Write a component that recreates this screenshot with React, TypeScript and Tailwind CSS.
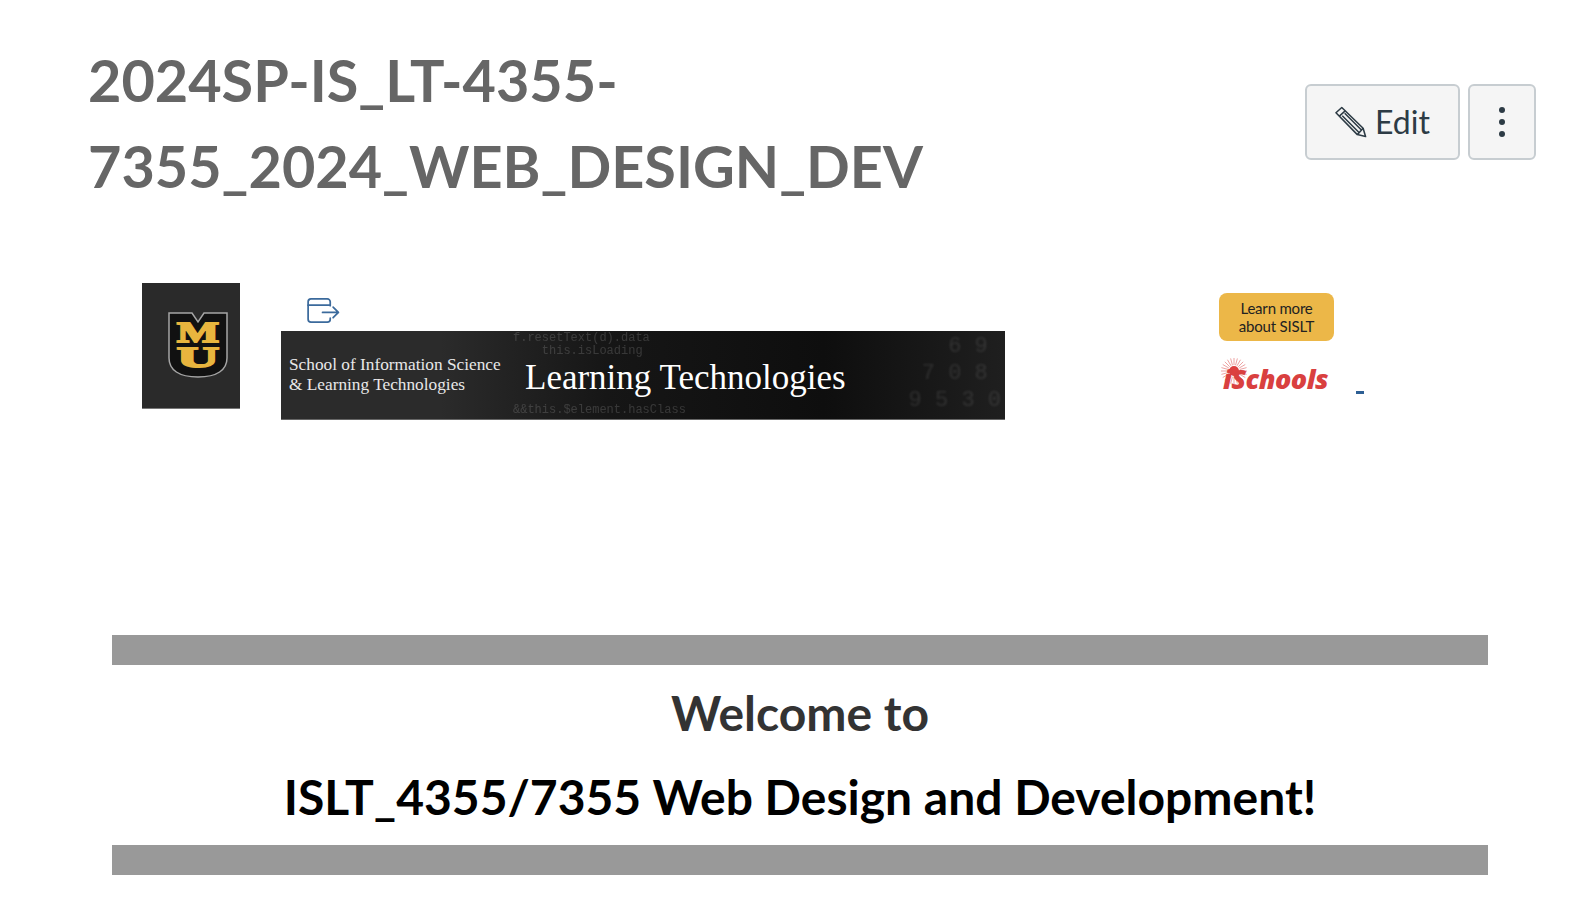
const serif = "font-['Liberation_Serif',serif]";
const mono = "font-['Liberation_Mono',monospace]";

const rays = Array.from({ length: 24 }, (_, i) => (i * Math.PI) / 12);

function PencilIcon() {
  return (
    <svg viewBox="0 0 33 33" className="w-[32px] h-[32px]" fill="none" stroke="#2d3b45" strokeWidth="1.600" strokeLinejoin="round">
      <path d="M1 7 7 1.500 29 23l2.500 8.500L23 29.500z" />
      <path d="M4.500 10.500 10.500 5M10 7.500l17 17M7.500 10l17 17M29 23l-6 6.500" />
    </svg>
  );
}

function ExternalIcon() {
  return (
    <svg viewBox="0 0 34 26" className="w-[33px] h-[25px]" fill="none" stroke="#3b6a9c" strokeWidth="1.800" strokeLinecap="round" strokeLinejoin="round">
      <path d="M24 8V4a3 3 0 0 0-3-3H4a3 3 0 0 0-3 3v18a3 3 0 0 0 3 3h17a3 3 0 0 0 3-3v-1" />
      <path d="M1 7.500h23M16 15h16.500M27 9.500l5.500 5.500-5.500 5.500" />
    </svg>
  );
}

function MuLogo() {
  return (
    <div className="w-[98px] h-[126px] bg-[#2a2a2a] border-b border-[#777] flex items-center justify-center shrink-0">
      <svg viewBox="0 0 60 66" className="w-[60px] h-[66px] ml-[14px] mb-[2px]">
        <path d="M1 1h23l6 9 6-9h23v45c0 12-10 19-29 19S1 58 1 46z" fill="#111" stroke="#a5a5a5" strokeWidth="1.500" />
        <text x="9" y="30" fontFamily="Liberation Serif" fontWeight="700" fontSize="30" fill="#e8b53e" stroke="#e8b53e" strokeWidth="1.800" textLength="42" lengthAdjust="spacingAndGlyphs">M</text>
        <text x="9" y="55" fontFamily="Liberation Serif" fontWeight="700" fontSize="29" fill="#e8b53e" stroke="#e8b53e" strokeWidth="1.800" textLength="42" lengthAdjust="spacingAndGlyphs">U</text>
      </svg>
    </div>
  );
}

function Banner() {
  return (
    <div className="relative w-[724px] h-[89px] overflow-hidden bg-[linear-gradient(90deg,#2b2b2b_0%,#2b2b2b_22%,#161616_45%,#0e0e0e_75%,#1f1f1f_100%)] border-b border-[#666] text-white">
      {/* faint code texture, kept clear of the titles */}
      <div className={`absolute left-[232px] top-[1px] ${mono} text-[12px] leading-[13px] text-white/15 blur-[0.6px] whitespace-pre`}>
        {'f.resetText(d).data\n    this.isLoading'}
      </div>
      <div className={`absolute left-[232px] top-[72px] ${mono} text-[12px] leading-[14px] text-white/15 blur-[0.6px] whitespace-pre`}>
        {'&&this.$element.hasClass'}
      </div>
      <div className={`absolute right-[4px] top-[2px] ${mono} text-[22px] leading-[27px] text-white/10 blur-[1px] whitespace-pre`}>
        {'    6 9\n  7 0 8\n 9 5 3 0'}
      </div>
      <div className={`absolute left-[8px] top-[24px] ${serif} text-[17.300px] leading-[20px] text-[#e8e8e8]`}>
        <div>School of Information Science</div>
        <div>&amp; Learning Technologies</div>
      </div>
      <div className={`absolute left-[244px] top-[26px] ${serif} text-[35px] leading-[42px] text-white`}>
        Learning Technologies
      </div>
    </div>
  );
}

function ISchools() {
  return (
    <div className="relative h-[40px] w-[112px]">
      <svg viewBox="0 0 28 28" className="absolute left-[1px] top-0 w-[28px] h-[28px]">
        {rays.map((a) => (
          <line
            key={a}
            x1={14 + 6 * Math.cos(a)}
            y1={14 + 6 * Math.sin(a)}
            x2={14 + 13 * Math.cos(a)}
            y2={14 + 13 * Math.sin(a)}
            stroke="#eda3a3"
            strokeWidth="1"
          />
        ))}
        <circle cx="14" cy="14" r="5" fill="#dd4040" />
      </svg>
      <span className="absolute left-[4px] top-[4px] font-['Open_Sans',sans-serif] italic font-extrabold text-[27px] leading-[36px] tracking-[-0.500px] text-[#d9403f]">
        iSchools
      </span>
    </div>
  );
}

export default function App() {
  return (
    <div className="w-[1592px] h-[908px] overflow-hidden bg-white font-['Lato',sans-serif]">
      <header className="flex justify-between items-start pl-[88px] pr-[56px] pt-[37px]">
        <h1 className="w-[1000px] text-[57.600px] leading-[86px] font-bold text-[#666666]">
          2024SP-IS_LT-4355-<br />7355_2024_WEB_DESIGN_DEV
        </h1>
        <div className="flex gap-[8px] mt-[47px]">
          <button className="w-[155px] h-[76px] flex items-center justify-center gap-[8px] bg-[#f5f5f5] border-2 border-[#c7cdd1] rounded-[6px] text-[32px] text-[#2d3b45]">
            <PencilIcon />
            Edit
          </button>
          <button className="w-[68px] h-[76px] flex flex-col items-center justify-center gap-[6px] bg-[#f5f5f5] border-2 border-[#c7cdd1] rounded-[6px]">
            <span className="w-[6px] h-[6px] rounded-full bg-[#2d3b45]" />
            <span className="w-[6px] h-[6px] rounded-full bg-[#2d3b45]" />
            <span className="w-[6px] h-[6px] rounded-full bg-[#2d3b45]" />
          </button>
        </div>
      </header>

      <section className="flex items-start pl-[142px] mt-[74px]">
        <MuLogo />
        <div className="ml-[41px] w-[724px]">
          <div className="pl-[26px] pt-[15px] h-[48px]">
            <ExternalIcon />
          </div>
          <Banner />
        </div>
        <div className="ml-[214px] pt-[10px] w-[115px]">
          <div className="h-[48px] rounded-[8px] bg-[#ecb748] flex items-center justify-center text-center text-[15px] leading-[18px] tracking-[-0.200px] text-[#222]">
            Learn more<br />about SISLT
          </div>
          <div className="mt-[16px] flex items-start">
            <ISchools />
          </div>
        </div>
        <div className="ml-[22px] mt-[108px] w-[8px] h-[3px] bg-[#2d5f94]" />
      </section>

      <section className="ml-[112px] w-[1376px] mt-[215px] text-center">
        <div className="h-[30px] bg-[#999999]" />
        <h2 className="mt-[13px] text-[48px] leading-[70px] font-bold text-[#333333]">Welcome to</h2>
        <h2 className="mt-[14px] text-[48px] leading-[70px] font-bold text-black">ISLT_4355/7355 Web Design and Development!</h2>
        <div className="mt-[13px] h-[30px] bg-[#999999]" />
      </section>
    </div>
  );
}
